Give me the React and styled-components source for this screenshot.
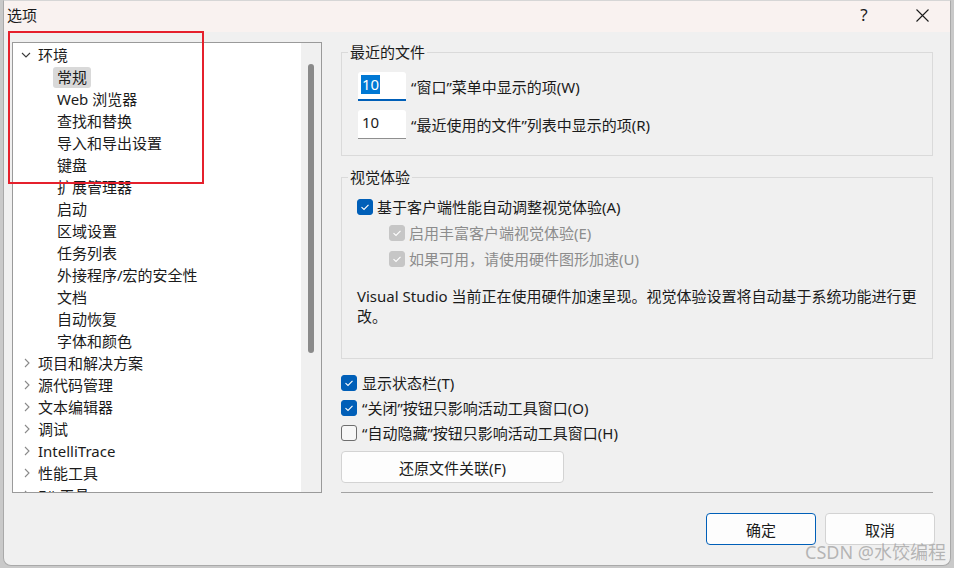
import React from 'react';
import styled, { createGlobalStyle } from 'styled-components';

const GlobalStyle = createGlobalStyle`
  html, body { margin: 0; padding: 0; }
  body { font-family: "Segoe UI", "Noto Sans", "Noto Sans CJK SC", sans-serif; }
  * { box-sizing: border-box; }
`;

const Screen = styled.div`
  position: relative;
  width: 954px;
  height: 568px;
  overflow: hidden;
  background: #c9c9c9;
  padding-left: 3px;
`;

const Window = styled.div`
  width: 948px;
  height: 566px;
  background: #f0f0f0;
  border: 1px solid #a9a9a9;
  border-top-color: #d6d6d6;
  border-radius: 0 0 8px 8px;
  display: flex;
  flex-direction: column;
  overflow: hidden;
  color: #1b1b1b;
  font-size: 15px;
`;

const TitleBar = styled.div`
  height: 31px;
  flex: none;
  display: flex;
  align-items: center;
  background: #f9f2f0;
  padding: 0 13px 3px 3px;
`;

const Title = styled.div`
  flex: 1;
  line-height: 20px;
`;

const Caption = styled.div`
  width: 30px;
  display: flex;
  justify-content: center;
  align-items: center;
  line-height: 20px;
  font-size: 17px;
  margin-left: ${p => p.$gap || 0}px;
`;

const Body = styled.div`
  display: flex;
  gap: 19px;
  padding: 10px 0 0 8px;
  flex: none;
`;

const TreeBox = styled.div`
  width: 310px;
  height: 451px;
  border: 1px solid #9a9a9a;
  background: #fff;
  display: flex;
  overflow: hidden;
`;

const TreeList = styled.div`
  flex: 1;
  padding-top: 1px;
`;

const TreeRow = styled.div`
  height: 22px;
  display: flex;
  align-items: center;
  padding-left: ${p => 7 + p.$level * 19}px;
  white-space: nowrap;
`;

const Expander = styled.span`
  width: 12px;
  height: 12px;
  margin-right: 6px;
  display: flex;
  align-items: center;
  justify-content: center;
  flex: none;
`;

const TreeLabel = styled.span`
  line-height: 21px;
  padding: 0 4px;
  margin-left: -4px;
  border-radius: 3px;
  background: ${p => (p.$selected ? '#d9d9d9' : 'transparent')};
`;

const ScrollTrack = styled.div`
  width: 20px;
  background: #f0f0f0;
  padding: 21px 0 0 7px;
`;

const ScrollThumb = styled.div`
  width: 6px;
  height: 289px;
  border-radius: 3px;
  background: #8a8a8a;
`;

const Pane = styled.div`
  width: 592px;
  display: flex;
  flex-direction: column;
`;

const Group = styled.fieldset`
  margin: ${p => p.$top || 0}px 0 0;
  padding: 0 5px ${p => p.$bottom}px ${p => p.$left}px;
  border: 1px solid #dadada;
  min-width: 0;
`;

const Legend = styled.legend`
  padding: 0 2px;
  margin-left: ${p => -p.$left + 6}px;
  line-height: 20px;
  color: #1b1b1b;
`;

const InputRow = styled.div`
  display: flex;
  align-items: center;
  gap: 5px;
  margin-top: ${p => p.$top}px;
`;

const NumBox = styled.div`
  width: 48px;
  height: 29px;
  background: #fff;
  border-bottom: ${p => (p.$focused ? '2px solid #005fb8' : '1px solid #8f8f8f')};
  border-radius: 3px 3px 0 0;
  padding: 3px 0 0 3px;
  display: flex;
  align-items: flex-start;
`;

const NumText = styled.span`
  line-height: 19px;
  padding: 0 1px;
  background: ${p => (p.$selected ? '#0078d4' : 'transparent')};
  color: ${p => (p.$selected ? '#fff' : '#1b1b1b')};
`;

const CheckRow = styled.label`
  display: flex;
  align-items: center;
  gap: ${p => p.$gap || 4}px;
  height: ${p => p.$h || 26}px;
  padding-left: ${p => p.$indent || 0}px;
  color: ${p => (p.$disabled ? '#8c8c8c' : '#1b1b1b')};
  line-height: 20px;
`;

const Box = styled.span`
  width: 16px;
  height: 16px;
  border-radius: 3px;
  flex: none;
  display: flex;
  align-items: center;
  justify-content: center;
  background: ${p => (p.$disabled ? '#c6c6c6' : p.$checked ? '#005fb8' : '#f7f7f7')};
  border: 1px solid ${p => (p.$disabled ? '#c6c6c6' : p.$checked ? '#005fb8' : '#6e6e6e')};
`;

const Note = styled.p`
  margin: 14px 0 0;
  line-height: 20px;
  max-width: 570px;
`;

const Checks = styled.div`
  display: flex;
  flex-direction: column;
  gap: 1px;
  margin-top: 12px;
`;

const Button = styled.button`
  width: ${p => p.$w}px;
  height: 32px;
  border-radius: 4px;
  background: #fdfdfd;
  border: 1px solid ${p => (p.$primary ? '#005fb8' : '#d3d3d3')};
  font: inherit;
  color: #1b1b1b;
  padding: 0;
  margin-top: ${p => p.$top || 0}px;
`;

const Rule = styled.div`
  margin-top: 9px;
  border-top: 1px solid #a3a3a3;
`;

const Footer = styled.div`
  display: flex;
  justify-content: flex-end;
  gap: 9px;
  padding: 20px 15px 0 0;
`;

const Annotation = styled.div`
  position: absolute;
  left: 8px;
  top: 31px;
  width: 196px;
  height: 153px;
  border: 2px solid #e5202c;
  pointer-events: none;
`;

const Watermark = styled.div`
  position: absolute;
  left: 805px;
  top: 539px;
  font-size: 18px;
  line-height: 26px;
  color: rgba(160, 160, 160, 0.75);
  white-space: nowrap;
`;

const Chevron = ({ open }) =>
  open ? (
    <svg width="10" height="6" viewBox="0 0 10 6">
      <path d="M1 1 L5 5 L9 1" fill="none" stroke="#3c3c3c" strokeWidth="1.1" />
    </svg>
  ) : (
    <svg width="6" height="10" viewBox="0 0 6 10" style={{ marginLeft: 2 }}>
      <path d="M1 1 L5 5 L1 9" fill="none" stroke="#8a8a8a" strokeWidth="1.1" />
    </svg>
  );

const Check = ({ checked, disabled, children, indent, gap, h }) => (
  <CheckRow $indent={indent} $disabled={disabled} $gap={gap} $h={h}>
    <Box $checked={checked} $disabled={disabled}>
      {checked && (
        <svg width="12" height="12" viewBox="0 0 12 12">
          <path d="M2.5 6.2 L5 8.5 L9.5 3.8" fill="none" stroke="#fff" strokeWidth="1.1" />
        </svg>
      )}
    </Box>
    <span>{children}</span>
  </CheckRow>
);

const tree = [
  { label: '环境', level: 0, open: true },
  { label: '常规', level: 1, selected: true },
  { label: 'Web 浏览器', level: 1 },
  { label: '查找和替换', level: 1 },
  { label: '导入和导出设置', level: 1 },
  { label: '键盘', level: 1 },
  { label: '扩展管理器', level: 1 },
  { label: '启动', level: 1 },
  { label: '区域设置', level: 1 },
  { label: '任务列表', level: 1 },
  { label: '外接程序/宏的安全性', level: 1 },
  { label: '文档', level: 1 },
  { label: '自动恢复', level: 1 },
  { label: '字体和颜色', level: 1 },
  { label: '项目和解决方案', level: 0, open: false },
  { label: '源代码管理', level: 0, open: false },
  { label: '文本编辑器', level: 0, open: false },
  { label: '调试', level: 0, open: false },
  { label: 'IntelliTrace', level: 0, open: false },
  { label: '性能工具', level: 0, open: false },
  { label: 'F# 工具', level: 0, open: false },
];

export default function App() {
  return (
    <>
      <GlobalStyle />
      <Screen>
        <Window>
          <TitleBar>
            <Title>选项</Title>
            <Caption>?</Caption>
            <Caption $gap={28}>
              <svg width="13" height="13" viewBox="0 0 13 13">
                <path d="M0.5 0.5 L12.5 12.5 M12.5 0.5 L0.5 12.5" stroke="#1b1b1b" strokeWidth="1.1" />
              </svg>
            </Caption>
          </TitleBar>

          <Body>
            <TreeBox>
              <TreeList>
                {tree.map((node, i) => (
                  <TreeRow key={i} $level={node.level}>
                    <Expander>
                      {node.level === 0 && <Chevron open={node.open} />}
                    </Expander>
                    <TreeLabel $selected={node.selected}>{node.label}</TreeLabel>
                  </TreeRow>
                ))}
              </TreeList>
              <ScrollTrack>
                <ScrollThumb />
              </ScrollTrack>
            </TreeBox>

            <Pane>
              <Group $left={16} $bottom={16}>
                <Legend $left={16}>最近的文件</Legend>
                <InputRow $top={10}>
                  <NumBox $focused>
                    <NumText $selected>10</NumText>
                  </NumBox>
                  <span>“窗口”菜单中显示的项(W)</span>
                </InputRow>
                <InputRow $top={9}>
                  <NumBox>
                    <NumText>10</NumText>
                  </NumBox>
                  <span>“最近使用的文件”列表中显示的项(R)</span>
                </InputRow>
              </Group>

              <Group $top={11} $left={15} $bottom={32}>
                <Legend $left={15}>视觉体验</Legend>
                <div style={{ height: 7 }} />
                <Check checked>基于客户端性能自动调整视觉体验(A)</Check>
                <Check checked disabled indent={32}>启用丰富客户端视觉体验(E)</Check>
                <Check checked disabled indent={32}>如果可用，请使用硬件图形加速(U)</Check>
                <Note>Visual Studio 当前正在使用硬件加速呈现。视觉体验设置将自动基于系统功能进行更改。</Note>
              </Group>

              <Checks>
                <Check checked gap={5} h={24}>显示状态栏(T)</Check>
                <Check checked gap={5} h={24}>“关闭”按钮只影响活动工具窗口(O)</Check>
                <Check gap={5} h={24}>“自动隐藏”按钮只影响活动工具窗口(H)</Check>
              </Checks>

              <Button $w={223} $top={6}>还原文件关联(F)</Button>
              <Rule />
            </Pane>
          </Body>

          <Footer>
            <Button $w={110} $primary>确定</Button>
            <Button $w={110}>取消</Button>
          </Footer>
        </Window>
        <Annotation />
        <Watermark>CSDN @水饺编程</Watermark>
      </Screen>
    </>
  );
}
